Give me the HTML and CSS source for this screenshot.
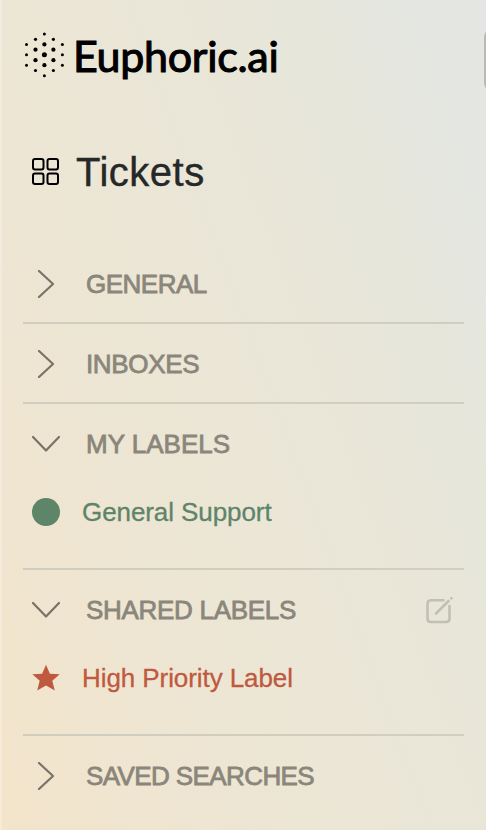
FILE: index.html
```html
<!DOCTYPE html>
<html lang="en">
<head>
<meta charset="utf-8">
<title>Euphoric.ai</title>
<link rel="stylesheet" href="styles.css">
</head>
<body>
<aside class="sidebar">
  <header class="brand">
    <svg class="brand-mark" width="42" height="46" viewBox="0 0 42 46">
      <g>
        <circle cx="2.5" cy="12.4" r="1.5"/><circle cx="2.5" cy="22.8" r="1.5"/><circle cx="2.5" cy="33.2" r="1.5"/>
        <circle cx="11.5" cy="7.3" r="1.6"/><circle cx="11.5" cy="17.7" r="2.1"/><circle cx="11.5" cy="28.2" r="2.1"/><circle cx="11.5" cy="38.5" r="1.6"/>
        <circle cx="20.4" cy="2" r="1.5"/><circle cx="20.4" cy="12.4" r="2.1"/><circle cx="20.4" cy="22.8" r="2.5"/><circle cx="20.4" cy="33.2" r="2.1"/><circle cx="20.4" cy="43.7" r="1.5"/>
        <circle cx="29.4" cy="7.3" r="1.6"/><circle cx="29.4" cy="17.7" r="2.1"/><circle cx="29.4" cy="28.2" r="2.1"/><circle cx="29.4" cy="38.5" r="1.6"/>
        <circle cx="38.4" cy="12.4" r="1.5"/><circle cx="38.4" cy="22.8" r="1.5"/><circle cx="38.4" cy="33.2" r="1.5"/>
      </g>
    </svg>
    <span class="brand-name">Euphoric.ai</span>
  </header>
  <div class="title">
    <svg width="28" height="28" viewBox="0 0 28 28" fill="none" stroke="#000" stroke-width="2">
      <rect x="1" y="1" width="10.5" height="10.5" rx="2"/><rect x="15.5" y="1" width="10.5" height="10.5" rx="2"/>
      <rect x="1" y="15.5" width="10.5" height="10.5" rx="2"/><rect x="15.5" y="15.5" width="10.5" height="10.5" rx="2"/>
    </svg>
    <h1>Tickets</h1>
  </div>
  <nav>
    <section>
      <div class="head"><svg class="chevron" viewBox="0 0 28 28"><path d="M7 1L21 14L7 27"/></svg><h2 class="general">GENERAL</h2></div>
    </section>
    <section>
      <div class="head"><svg class="chevron" viewBox="0 0 28 28"><path d="M7 1L21 14L7 27"/></svg><h2 class="inboxes">INBOXES</h2></div>
    </section>
    <section>
      <div class="head"><svg class="chevron" viewBox="0 0 28 28"><path d="M1 7L14 20.5L27 7"/></svg><h2 class="mine">MY LABELS</h2></div>
      <div class="label green"><svg width="28" height="28" viewBox="0 0 28 28"><circle cx="14" cy="14" r="14"/></svg><span>General Support</span></div>
    </section>
    <section>
      <div class="head"><svg class="chevron" viewBox="0 0 28 28"><path d="M1 7L14 20.5L27 7"/></svg><h2 class="shared">SHARED LABELS</h2>
        <svg class="edit" width="28" height="28" viewBox="0 0 28 28"><path d="M17.5 4.2H5Q1.5 4.2 1.5 7.7V22.5Q1.5 26 5 26H20Q23.5 26 23.5 22.5V10"/><path d="M10 17.5L22.5 5"/><path d="M25.3 2.4L25.5 2.2"/></svg>
      </div>
      <div class="label red"><svg width="28" height="28" viewBox="0 0 28 28"><path d="M14 .8L17.9 9.7L27.7 10.3L20.3 16.8L22.8 26.4L14 21.4L5.2 26.4L7.7 16.8L.3 10.3L10.1 9.7Z"/></svg><span>High Priority Label</span></div>
    </section>
    <section>
      <div class="head"><svg class="chevron" viewBox="0 0 28 28"><path d="M7 1L21 14L7 27"/></svg><h2 class="saved">SAVED SEARCHES</h2></div>
    </section>
  </nav>
  <div class="edge-tab"></div>
</aside>
</body>
</html>
```
FILE: styles.css
```css
* { box-sizing: border-box; }
body { margin: 0; font-family: "Liberation Sans", Arial, sans-serif; }
.sidebar {
  position: relative;
  width: 486px;
  height: 830px;
  overflow: hidden;
  padding: 0 22px 0 23px;
  background:
    linear-gradient(90deg, rgba(255,255,255,.25) 2px, transparent 2px),
    linear-gradient(70deg, #f3e4ca 0%, #efe5d1 20%, #ece6d5 40%, #e9e6d8 62%, #e6e6db 78%, #e4e6e1 90%, #e4e6e3 100%);
}
svg { flex: none; display: block; }
h1, h2 { margin: 0; white-space: nowrap; }
.brand { display: flex; height: 114px; padding: 32px 0 0 1px; }
.brand-name {
  margin: -2px 0 0 7px;
  font: 400 43px/52px Lato, sans-serif;
  letter-spacing: -.3px;
  -webkit-text-stroke: 1.1px #000;
}
.title { display: flex; align-items: center; height: 116px; padding-left: 9px; gap: 16px; }
h1 { font-size: 40px; line-height: 48px; font-weight: 400; color: #262828; letter-spacing: .5px; -webkit-text-stroke: .4px #262828; }
nav { padding-top: 14px; }
section + section { border-top: 2px solid #d1cdbf; }
.head { display: flex; align-items: center; height: 78px; padding: 2px 10px 0 9px; gap: 26px; }
h2 { font-size: 26px; line-height: 32px; font-weight: 400; color: #8b867b; letter-spacing: -.5px; -webkit-text-stroke: .8px #8b867b; }
.inboxes { letter-spacing: -.35px; }
.mine { letter-spacing: 0; }
.shared { letter-spacing: -.3px; }
.saved { letter-spacing: -.6px; }
.chevron { width: 28px; height: 28px; fill: none; stroke: #787268; stroke-width: 2.2; stroke-linecap: round; stroke-linejoin: round; }
.edit { margin-left: auto; fill: none; stroke: #c2c0b4; stroke-width: 2.6; stroke-linecap: round; }
.label { display: flex; align-items: center; height: 86px; padding: 0 0 26px 9px; gap: 22px; font-size: 26px; line-height: 32px; letter-spacing: -.08px; -webkit-text-stroke: .3px currentColor; }
.label svg { fill: currentColor; }
.green { color: #5e8469; }
.red { color: #bf593f; }
.edge-tab { position: absolute; left: 484px; top: 29px; width: 30px; height: 62px; border-radius: 8px; background: #b9b9b6; }
```
